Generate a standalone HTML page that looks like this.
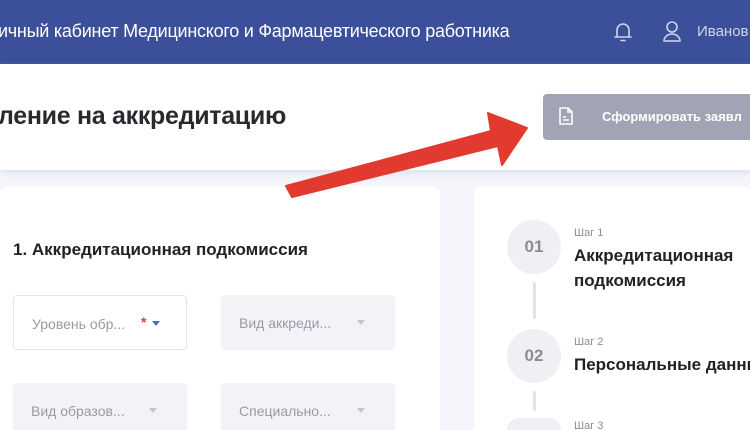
<!DOCTYPE html>
<html><head><meta charset="utf-8"><style>
*{margin:0;padding:0;box-sizing:border-box}
html,body{width:750px;height:430px;overflow:hidden}
body{background:#f4f6fb;font-family:"Liberation Sans","Noto Sans CJK SC",sans-serif;position:relative;white-space:nowrap}
.hdr{position:absolute;left:0;top:0;width:750px;height:64px;background:#3c4f9a;overflow:hidden}
.hdr .t{position:absolute;left:-2px;top:21px;color:#fff;font-size:18px;letter-spacing:-0.25px}
.hdr .u{position:absolute;left:697px;top:23px;color:#cfd5ea;font-size:15px}
.top{position:absolute;left:0;top:64px;width:750px;height:106px;background:#fff;box-shadow:0 3px 6px rgba(200,205,225,.5)}
.title{position:absolute;left:-2px;top:102px;font-size:25px;font-weight:bold;color:#2a2a2e;letter-spacing:-0.3px}
.btn{position:absolute;left:543px;top:94px;width:207px;height:46px;background:#a2a3b5;border-radius:4px 0 0 4px;overflow:hidden}
.btn span{position:absolute;left:59px;top:15px;color:#fff;font-weight:bold;font-size:13px}
.card{position:absolute;background:#fff;border-radius:8px 8px 0 0;overflow:hidden}
.h1{position:absolute;left:13px;top:240px;font-size:17px;font-weight:bold;color:#222}
.sel{position:absolute;width:174px;border-radius:4px 4px 0 0;background:#f2f3f7;color:#9a9aa6;font-size:14px;padding:20px 0 0 18px}
.sel.w{background:#fff;border:1px solid #e3e4ea;border-radius:4px}
.sel i{position:absolute;right:30px;top:25px;width:0;height:0;border-left:4px solid transparent;border-right:4px solid transparent;border-top:5px solid #c4c5cf}
.circ{position:absolute;width:54px;height:54px;border-radius:50%;background:#f0f0f4;color:#8b8b96;font-size:17px;font-weight:bold;text-align:center;line-height:54px}
.ln{position:absolute;left:533px;width:3px;background:#e2e2e7;border-radius:2px}
.sm{position:absolute;left:574px;font-size:11px;color:#8d8d98}
.bg{position:absolute;left:574px;font-size:17px;font-weight:bold;color:#222}
</style></head><body>
<div class="hdr"><div class="t">ичный кабинет Медицинского и Фармацевтического работника</div>
<svg style="position:absolute;left:612px;top:20px" width="22" height="24" viewBox="0 0 22 24"><path d="M5 17V10a6 6 0 0 1 12 0v7M3 17h16M9 20.5h4" stroke="#cfd5ea" stroke-width="1.6" fill="none" stroke-linecap="round"/></svg>
<svg style="position:absolute;left:660px;top:19px" width="24" height="26" viewBox="0 0 24 26"><circle cx="12" cy="8" r="5" stroke="#cfd5ea" stroke-width="1.6" fill="none"/><path d="M4 22a8 7 0 0 1 16 0z" stroke="#cfd5ea" stroke-width="1.6" fill="none" stroke-linejoin="round"/></svg>
<div class="u">Иванов</div></div>
<div class="top"></div>
<div class="title">ление на аккредитацию</div>
<div class="btn"><svg style="position:absolute;left:15px;top:12px" width="16" height="20" viewBox="0 0 16 20"><path d="M2 2h8l4 4v12H2z M10 2v4h4 M5 11h3 M5 14h6" stroke="#fff" stroke-width="1.6" fill="none" stroke-linejoin="round"/></svg><span>Сформировать заявл</span></div>
<div class="card" style="left:0;top:186px;width:440px;height:244px"></div>
<div class="card" style="left:474px;top:186px;width:276px;height:244px"></div>
<div class="h1">1. Аккредитационная подкомиссия</div>
<div class="sel w" style="left:13px;top:295px;height:55px">Уровень обр... <b style="color:#e03a3a;position:absolute;left:127px;top:18px">*</b><i style="border-top-color:#4a6fc4;right:26px"></i></div>
<div class="sel" style="left:221px;top:295px;height:55px;border-radius:4px">Вид аккреди...<i></i></div>
<div class="sel" style="left:13px;top:383px;height:47px">Вид образов...<i></i></div>
<div class="sel" style="left:221px;top:383px;height:47px">Специально...<i></i></div>
<div class="circ" style="left:507px;top:220px">01</div>
<div class="ln" style="top:282px;height:37px"></div>
<div class="circ" style="left:507px;top:329px">02</div>
<div class="ln" style="top:391px;height:20px"></div>
<div class="circ" style="left:507px;top:418px;height:12px;border-radius:27px 27px 0 0"></div>
<div class="sm" style="top:420px;height:10px;overflow:hidden">Шаг 3</div>
<div class="sm" style="top:227px">Шаг 1</div>
<div class="bg" style="top:246px">Аккредитационная</div>
<div class="bg" style="top:271px">подкомиссия</div>
<div class="sm" style="top:336px">Шаг 2</div>
<div class="bg" style="top:355px">Персональные данные</div>
<svg style="position:absolute;left:0;top:0" width="750" height="430"><polygon points="286,186 491,131 488,113 527,128 502,165 498,146 292,197" fill="#e23a2f" stroke="#e23a2f" stroke-width="2" stroke-linejoin="round"/></svg>
</body></html>
